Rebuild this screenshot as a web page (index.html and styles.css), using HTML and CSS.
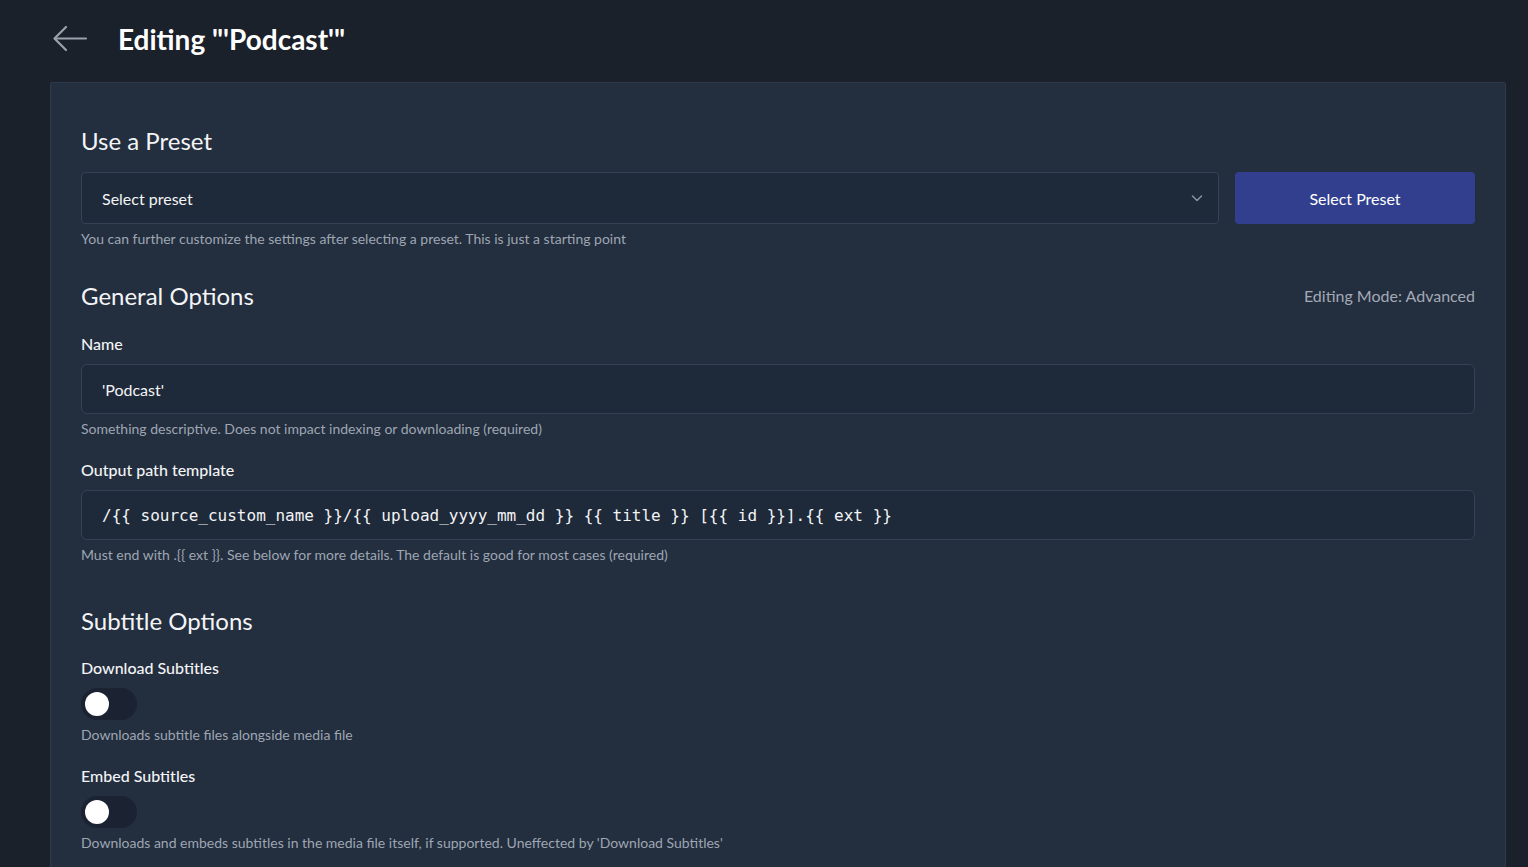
FILE: index.html
```html
<!DOCTYPE html>
<html lang="en">
  <head>
    <meta charset="UTF-8" />
    <meta name="viewport" content="width=device-width, initial-scale=1.0" />
    <title>Editing Podcast</title>
    <link rel="stylesheet" href="styles.css">
  </head>
  <body>
    <header class="page-header">
      <a class="back-link" href="#">
        <svg width="36" height="28" viewBox="0 0 36 28" fill="none" stroke="#9aa1ad" stroke-width="2.2" stroke-linecap="round" stroke-linejoin="round">
          <path d="M34 13.5H3" />
          <path d="M14 2L2.5 13.5L14 25" />
        </svg>
      </a>
      <h1>Editing "'Podcast'"</h1>
    </header>

    <main class="card">
      <section class="section">
        <h2>Use a Preset</h2>
        <div class="preset-row">
          <div class="select">
            <span>Select preset</span>
            <svg width="14" height="14" viewBox="0 0 14 14" fill="none" stroke="#8b93a1" stroke-width="1.5" stroke-linecap="round" stroke-linejoin="round">
              <path d="M2.5 5l4.5 4.5L11.5 5" />
            </svg>
          </div>
          <button class="btn-primary" type="button">Select Preset</button>
        </div>
        <p class="help">You can further customize the settings after selecting a preset. This is just a starting point</p>
      </section>

      <section class="section">
        <div class="section-head">
          <h2>General Options</h2>
          <span class="mode">Editing Mode: Advanced</span>
        </div>
        <div class="field">
          <label>Name</label>
          <div class="input">'Podcast'</div>
          <p class="help">Something descriptive. Does not impact indexing or downloading (required)</p>
        </div>
        <div class="field">
          <label>Output path template</label>
          <div class="input mono">/{{ source_custom_name }}/{{ upload_yyyy_mm_dd }} {{ title }} [{{ id }}].{{ ext }}</div>
          <p class="help">Must end with .{{ ext }}. See below for more details. The default is good for most cases (required)</p>
        </div>
      </section>

      <section class="section subtitles">
        <h2>Subtitle Options</h2>
        <div class="field">
          <label>Download Subtitles</label>
          <div class="toggle"><span class="knob"></span></div>
          <p class="help">Downloads subtitle files alongside media file</p>
        </div>
        <div class="field">
          <label>Embed Subtitles</label>
          <div class="toggle"><span class="knob"></span></div>
          <p class="help">Downloads and embeds subtitles in the media file itself, if supported. Uneffected by 'Download Subtitles'</p>
        </div>
      </section>
    </main>
  </body>
</html>
```

FILE: styles.css
```css
body {
  font-family: Lato, "Liberation Sans", sans-serif;
  margin: 0;
  background-color: #1b212b;
  color: #f3f4f6;
  overflow: hidden;
}
.page-header {
  display: flex;
  align-items: center;
  height: 82px;
  padding-left: 52px;
}
.back-link {
  display: flex;
  width: 36px;
  margin-right: 30px;
  margin-top: -4px;
}
h1 {
  margin: 0;
  font-size: 28px;
  font-weight: 700;
  color: #ffffff;
  margin-top: -4px;
}
.card {
  margin: 0 22px 0 50px;
  background-color: #232e3f;
  border: 1px solid #2e3a4c;
  border-radius: 2px;
  padding: 43px 30px 20px;
  min-height: 800px;
}
h2 {
  margin: 0;
  font-size: 24px;
  font-weight: 400;
  color: #f3f4f6;
}
.section {
  margin-bottom: 34px;
}
.section.subtitles {
  margin-top: 43px;
}
.section h2 {
  margin-bottom: 17px;
}
.section-head {
  display: flex;
  justify-content: space-between;
  align-items: center;
  padding-bottom: 1px;
}
.section-head h2 {
  margin-bottom: 0;
}
.mode {
  font-size: 16px;
  color: #a3aab5;
}
.preset-row {
  display: flex;
  gap: 16px;
}
.select {
  flex: 1;
  display: flex;
  align-items: center;
  justify-content: space-between;
  height: 50px;
  padding: 0 14px 0 20px;
  background-color: #1e2939;
  border: 1px solid #364254;
  border-radius: 4px;
  font-size: 16px;
}
.btn-primary {
  width: 240px;
  height: 52px;
  border: none;
  border-radius: 4px;
  background-color: #313f8e;
  color: #ffffff;
  font-family: inherit;
  font-size: 16px;
}
.help {
  margin: 7px 0 0;
  font-size: 14px;
  line-height: 16px;
  color: #9ea6b2;
}
.field {
  margin-top: 23px;
}
label {
  display: block;
  font-size: 16px;
  font-weight: 500;
  margin-bottom: 11px;
}
.input {
  height: 48px;
  display: flex;
  align-items: center;
  padding: 0 20px;
  background-color: #1e2939;
  border: 1px solid #364254;
  border-radius: 6px;
  font-size: 16px;
}
.input.mono {
  font-family: "DejaVu Sans Mono", "Liberation Mono", monospace;
  font-size: 16px;
}
.toggle {
  width: 56px;
  height: 32px;
  border-radius: 16px;
  background-color: #1b2231;
  display: flex;
  align-items: center;
  padding-left: 4px;
  box-sizing: border-box;
}
.knob {
  width: 24px;
  height: 24px;
  border-radius: 50%;
  background-color: #ffffff;
}
```
